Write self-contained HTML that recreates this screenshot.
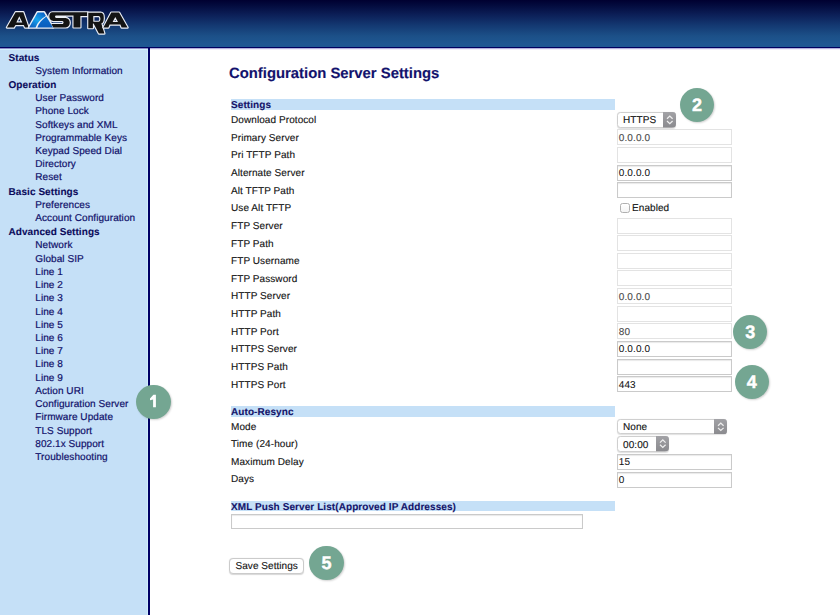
<!DOCTYPE html>
<html><head><meta charset="utf-8">
<style>
*{margin:0;padding:0;box-sizing:border-box}
html,body{width:840px;height:615px;overflow:hidden;background:#fff;font-family:"Liberation Sans",sans-serif;text-rendering:geometricPrecision}
#hdr{position:absolute;left:0;top:0;width:840px;height:47px;background:linear-gradient(#000030 0px,#02083a 4px,#0b1d55 14px,#143a73 26px,#1c5088 36px,#1f5792 44px,#1f5792 47px)}
#hline{position:absolute;left:0;top:47px;width:840px;height:1px;background:#000060}
#hshade{position:absolute;left:150px;top:48px;width:690px;height:2px;background:linear-gradient(#b4b0dc 0px,#b4b0dc 1px,#f1eff8 1px,#f1eff8 2px)}
#sshade{position:absolute;left:0;top:48px;width:148px;height:2px;background:linear-gradient(#8c8cc8 0px,#8c8cc8 1px,#d4f2fc 1px,#d4f2fc 2px)}
#sright{position:absolute;left:147px;top:49px;width:1px;height:566px;background:#d0eefb}
#side{position:absolute;left:0;top:48px;width:148px;height:567px;background:#c5e0f7}
#vline{position:absolute;left:148px;top:47px;width:2px;height:568px;background:#000066}
.n{position:absolute;white-space:nowrap;font-size:10px;line-height:13.3px;color:#10106a;letter-spacing:0.07px;-webkit-text-stroke:0.2px #10106a}
.n.h{font-weight:bold;left:8.5px;color:#0c0c5c;-webkit-text-stroke:0.1px #0c0c5c}
.n.i{left:35.3px}
.t{position:absolute;white-space:nowrap;font-size:10px;line-height:13.3px;color:#111;letter-spacing:0.08px;-webkit-text-stroke:0.12px #111}
#title{position:absolute;left:229px;font-size:14.85px;line-height:13.3px;font-weight:bold;color:#12126c;white-space:nowrap;-webkit-text-stroke:0.15px #12126c}
.bar{position:absolute;left:231px;width:384px;background:#c5e0f7}
.bt{position:absolute;left:231px;font-size:10px;line-height:13.3px;font-weight:bold;color:#14146a;white-space:nowrap;letter-spacing:0.08px;-webkit-text-stroke:0.1px #14146a}
.inp{position:absolute;left:617px;width:114.8px;height:16px;border:1px solid #e3e3e3;background:#fff}
.t.it{color:#4a4a4a;-webkit-text-stroke:0.12px #4a4a4a;letter-spacing:0.1px}
.t.it.on{color:#111;-webkit-text-stroke:0.05px #111}
.inp.on{border-color:#cacaca;box-shadow:inset 0 1px 1px rgba(0,0,0,0.09)}
.sel{position:absolute;height:15.6px;border:1px solid #cfcfcf;border-radius:3.5px;background:#fff;box-shadow:0 0.5px 1px rgba(0,0,0,0.12)}
.sel svg{position:absolute;right:-1px;top:-1px}
.circ{position:absolute;width:34.4px;height:34.4px;border-radius:50%;background:#74a692;color:#fff;font-weight:bold;font-size:18px;text-align:center;line-height:34.4px;box-shadow:1px 1px 2px rgba(0,0,0,0.18);-webkit-text-stroke:0.5px #fff;text-shadow:0 0 1px rgba(0,40,20,0.25)}
.cb{position:absolute;width:10px;height:9.7px;border:1px solid #b0b0b0;border-radius:2.5px;background:linear-gradient(#fff,#f4f4f4)}
.btn{position:absolute;width:74.6px;height:16px;border:1px solid #cbcbcb;border-radius:4px;background:#fff;box-shadow:0 0.6px 1px rgba(0,0,0,0.16)}
.t.bt2{letter-spacing:0.05px}
</style></head><body>
<svg width="0" height="0" style="position:absolute"><defs><linearGradient id="ag" x1="0" y1="0" x2="0" y2="1"><stop offset="0" stop-color="#a2a2a6"/><stop offset="1" stop-color="#8a8a8e"/></linearGradient></defs></svg>
<div id="hdr"></div>
<svg id="logo" width="140" height="40" viewBox="0 0 140 40" style="position:absolute;left:0;top:0">
<defs><linearGradient id="bg1" x1="0" y1="1" x2="0.8" y2="0"><stop offset="0" stop-color="#0b55b8"/><stop offset="0.55" stop-color="#16a4ee"/><stop offset="1" stop-color="#0b62c8"/></linearGradient>
<linearGradient id="bg2" x1="0" y1="0" x2="0" y2="1"><stop offset="0" stop-color="#0a6fd0"/><stop offset="1" stop-color="#0a5cbc"/></linearGradient></defs>
<g stroke="#eceff6" stroke-width="2.3" stroke-linejoin="round" fill-rule="evenodd" paint-order="stroke">
<path fill="#141414" d="M6.9,27.6 L15.6,12.2 L23.3,12.2 L28.6,27.6 L25.0,27.6 L23.8,25.0 L15.5,25.0 L13.9,27.6 Z M19.3,16.2 L22.3,22.4 L16.3,22.4 Z"/>
<path fill="#eef1f7" d="M28.9,27.6 L37.4,12.2 L44.1,12.2 L53.2,27.6 Z"/>
<path fill="#141414" d="M52.3,12.3 L87.6,12.3 L87.6,16.0 L80.4,16.0 L80.4,27.4 L73.5,27.4 L73.5,15.5 L56.2,15.5 C54.6,15.5 54.6,17.9 56.2,17.9 L65.5,17.9 C71.2,17.9 71.2,27.4 65.5,27.4 L53.3,27.4 L51.4,24.1 L62.3,24.1 C64.0,24.1 64.0,21.0 62.3,21.0 L53.5,21.0 C48.0,21.0 48.2,12.3 52.3,12.3 Z"/>
<path fill="#141414" d="M88.3,12.7 L100.6,12.7 C103.4,12.7 103.8,15 103.8,18 C103.8,21.5 102.8,23.2 101.3,23.5 L104.4,33.5 L98.9,33.5 L93.6,23.6 L92.9,23.6 L92.9,28.2 L88.3,28.2 Z M93.3,16.0 L98.6,16.0 C101.0,16.0 101.0,21.8 98.6,21.8 L93.3,21.8 Z"/>
<path fill="#141414" d="M103.4,27.6 L111.3,12.6 L119.1,12.6 L127.6,27.6 L121.6,27.6 L120.4,24.6 L109.6,24.6 L108.4,27.6 Z M115.3,16.9 L118.0,22.0 L112.6,22.0 Z"/>
</g>
<path fill="url(#bg1)" d="M29.1,27.4 L37.6,12.4 L43.9,12.4 L45.9,15.9 C41,18.6 37.3,22.5 35.6,27.4 Z"/>
<path fill="url(#bg2)" d="M46.3,16.6 C42,19.6 39,23.3 37.3,27.4 L53.0,27.4 Z"/>
</svg>
<div id="hline"></div><div id="side"></div><div id="sright"></div><div id="hshade"></div><div id="sshade"></div><div id="vline"></div>
<div class="n h" style="top:52px">Status</div>
<div class="n i" style="top:65px">System Information</div>
<div class="n h" style="top:79px">Operation</div>
<div class="n i" style="top:92px">User Password</div>
<div class="n i" style="top:105px">Phone Lock</div>
<div class="n i" style="top:119px">Softkeys and XML</div>
<div class="n i" style="top:132px">Programmable Keys</div>
<div class="n i" style="top:145px">Keypad Speed Dial</div>
<div class="n i" style="top:158px">Directory</div>
<div class="n i" style="top:171px">Reset</div>
<div class="n h" style="top:186px">Basic Settings</div>
<div class="n i" style="top:199px">Preferences</div>
<div class="n i" style="top:212px">Account Configuration</div>
<div class="n h" style="top:226px">Advanced Settings</div>
<div class="n i" style="top:239px">Network</div>
<div class="n i" style="top:253px">Global SIP</div>
<div class="n i" style="top:266px">Line 1</div>
<div class="n i" style="top:279px">Line 2</div>
<div class="n i" style="top:292px">Line 3</div>
<div class="n i" style="top:306px">Line 4</div>
<div class="n i" style="top:319px">Line 5</div>
<div class="n i" style="top:332px">Line 6</div>
<div class="n i" style="top:345px">Line 7</div>
<div class="n i" style="top:358px">Line 8</div>
<div class="n i" style="top:372px">Line 9</div>
<div class="n i" style="top:385px">Action URI</div>
<div class="n i" style="top:398px">Configuration Server</div>
<div class="n i" style="top:411px">Firmware Update</div>
<div class="n i" style="top:425px">TLS Support</div>
<div class="n i" style="top:438px">802.1x Support</div>
<div class="n i" style="top:451px">Troubleshooting</div>
<div id="title" style="top:68px">Configuration Server Settings</div>
<div class="t" style="left:231px;top:114px">Download Protocol</div>
<div class="t" style="left:231px;top:132px">Primary Server</div>
<div class="t" style="left:231px;top:149px">Pri TFTP Path</div>
<div class="t" style="left:231px;top:167px">Alternate Server</div>
<div class="t" style="left:231px;top:185px">Alt TFTP Path</div>
<div class="t" style="left:231px;top:202px">Use Alt TFTP</div>
<div class="t" style="left:231px;top:220px">FTP Server</div>
<div class="t" style="left:231px;top:238px">FTP Path</div>
<div class="t" style="left:231px;top:255px">FTP Username</div>
<div class="t" style="left:231px;top:273px">FTP Password</div>
<div class="t" style="left:231px;top:290px">HTTP Server</div>
<div class="t" style="left:231px;top:308px">HTTP Path</div>
<div class="t" style="left:231px;top:326px">HTTP Port</div>
<div class="t" style="left:231px;top:343px">HTTPS Server</div>
<div class="t" style="left:231px;top:361px">HTTPS Path</div>
<div class="t" style="left:231px;top:379px">HTTPS Port</div>
<div class="inp" style="top:129.30px"></div>
<div class="t it" style="left:618.8px;top:132px">0.0.0.0</div>
<div class="inp" style="top:146.95px"></div>
<div class="inp on" style="top:164.59px"></div>
<div class="t it on" style="left:618.8px;top:167px">0.0.0.0</div>
<div class="inp on" style="top:182.24px"></div>
<div class="inp" style="top:217.53px"></div>
<div class="inp" style="top:235.18px"></div>
<div class="inp" style="top:252.83px"></div>
<div class="inp" style="top:270.48px"></div>
<div class="inp" style="top:288.12px"></div>
<div class="t it" style="left:618.8px;top:291px">0.0.0.0</div>
<div class="inp" style="top:305.77px"></div>
<div class="inp" style="top:323.42px"></div>
<div class="t it" style="left:618.8px;top:326px">80</div>
<div class="inp on" style="top:341.06px"></div>
<div class="t it on" style="left:618.8px;top:343px">0.0.0.0</div>
<div class="inp on" style="top:358.71px"></div>
<div class="inp on" style="top:376.36px"></div>
<div class="t it on" style="left:618.8px;top:379px">443</div>
<div class="bar" style="top:99.4px;height:10.6px"></div>
<div class="bt" style="top:99px">Settings</div>
<div class="sel" style="left:617px;top:112px;width:59px"><svg width="13" height="15.6" viewBox="0 0 13 15.6"><path d="M0,0 H9.5 A3.5,3.5 0 0 1 13,3.5 V12.1 A3.5,3.5 0 0 1 9.5,15.6 H0 Z" fill="url(#ag)"/><path d="M4.00,6.80 L6.80,4.10 L9.60,6.80 M4.00,9.00 L6.80,11.60 L9.60,9.00" stroke="#efefef" stroke-width="1.25" fill="none"/></svg></div>
<div class="t" style="left:623px;top:114px">HTTPS</div>
<div class="cb" style="left:619.5px;top:203px"></div>
<div class="t" style="left:632px;top:202px">Enabled</div>
<div class="bar" style="top:406.2px;height:10.5px"></div>
<div class="bt" style="top:406px">Auto-Resync</div>
<div class="t" style="left:231px;top:421px">Mode</div>
<div class="t" style="left:231px;top:438px">Time (24-hour)</div>
<div class="t" style="left:231px;top:456px">Maximum Delay</div>
<div class="t" style="left:231px;top:473px">Days</div>
<div class="sel" style="left:617px;top:418.9px;width:109.8px"><svg width="13" height="15.4" viewBox="0 0 13 15.4"><path d="M0,0 H9.5 A3.5,3.5 0 0 1 13,3.5 V11.9 A3.5,3.5 0 0 1 9.5,15.4 H0 Z" fill="url(#ag)"/><path d="M4.00,6.70 L6.80,4.00 L9.60,6.70 M4.00,8.90 L6.80,11.50 L9.60,8.90" stroke="#efefef" stroke-width="1.25" fill="none"/></svg></div>
<div class="t" style="left:623px;top:421px">None</div>
<div class="sel" style="left:617px;top:436.4px;width:51.5px"><svg width="13" height="15.2" viewBox="0 0 13 15.2"><path d="M0,0 H9.5 A3.5,3.5 0 0 1 13,3.5 V11.7 A3.5,3.5 0 0 1 9.5,15.2 H0 Z" fill="url(#ag)"/><path d="M4.00,6.60 L6.80,3.90 L9.60,6.60 M4.00,8.80 L6.80,11.40 L9.60,8.80" stroke="#efefef" stroke-width="1.25" fill="none"/></svg></div>
<div class="t" style="left:623px;top:439px">00:00</div>
<div class="inp on" style="top:454px"></div>
<div class="t it on" style="left:618.8px;top:456px">15</div>
<div class="inp on" style="top:471.7px"></div>
<div class="t it on" style="left:618.8px;top:474px">0</div>
<div class="bar" style="top:501.2px;height:10.2px"></div>
<div class="bt" style="top:501px">XML Push Server List(Approved IP Addresses)</div>
<div class="inp on" style="left:231px;top:513.9px;width:352px;height:15.4px"></div>
<div class="btn" style="left:229.3px;top:557.8px"></div>
<div class="t bt2" style="left:235.5px;top:560px">Save Settings</div>
<div class="circ" style="left:136.2px;top:384.6px"><svg width="34.4" height="34.4" style="position:absolute;left:0;top:0"><path d="M14.00,13.40 L17.40,9.70 L19.90,9.70 L19.90,22.20 L17.10,22.20 L17.10,14.40 L14.00,15.30 Z" fill="#fff"/></svg></div>
<div class="circ" style="left:679.8px;top:87.6px">2</div>
<div class="circ" style="left:733px;top:315px">3</div>
<div class="circ" style="left:734.6px;top:365px">4</div>
<div class="circ" style="left:309.4px;top:546px">5</div>
</body></html>
